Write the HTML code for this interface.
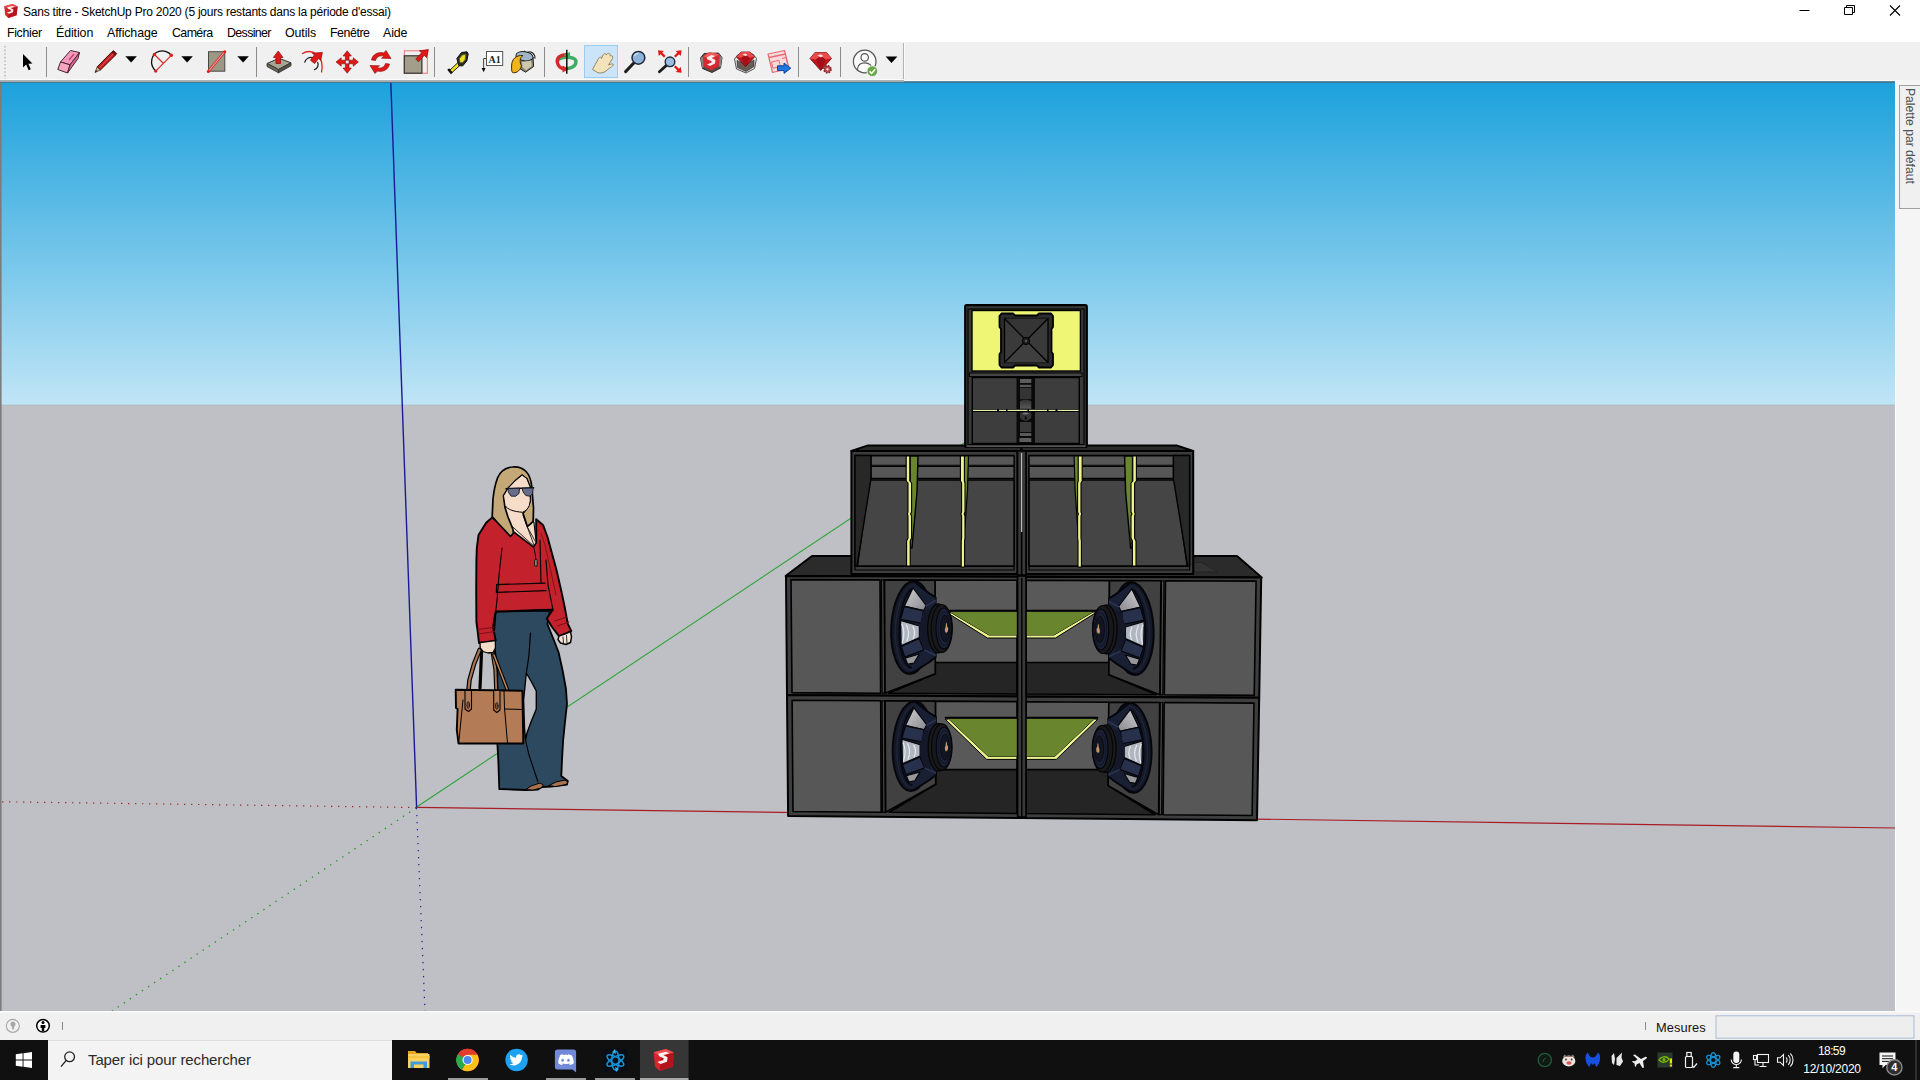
<!DOCTYPE html>
<html><head><meta charset="utf-8"><title>SketchUp</title>
<style>
html,body{margin:0;padding:0;}
body{width:1920px;height:1080px;overflow:hidden;background:#f0f0f0;font-family:"Liberation Sans",sans-serif;position:relative;}
.abs{position:absolute;}
#title{left:0;top:0;width:1920px;height:42px;background:#fff;}
#title .t{position:absolute;left:23px;top:5px;font-size:12px;color:#000;white-space:nowrap;letter-spacing:-0.23px;}
.menu{position:absolute;top:26px;font-size:12.4px;color:#000;white-space:nowrap;letter-spacing:-0.1px;}
#toolbar{left:0;top:42px;width:1920px;height:38px;background:#f0f0f0;}
#tbline{z-index:5;left:0;top:79px;width:1895px;height:4.4px;background:linear-gradient(#fafafa 0,#fafafa 1px,#b3b5b8 1px,#a3abb1 2.7px,#3f7795 2.9px,#3f7795 3.8px,#2d93c6 4.4px);}
#view{left:0;top:82px;width:1895px;height:929px;}
#tray{left:1895px;top:80px;width:25px;height:931px;background:#f5f5f5;border-left:1px solid #fff;box-sizing:border-box;}
#traytab{left:1899px;top:85px;width:21px;height:123.5px;border:1px solid #a0a0a0;border-right:none;background:#f0f0f0;box-sizing:border-box;}
#traytab span{position:absolute;left:16.5px;top:2.2px;transform-origin:0 0;transform:rotate(90deg);font-size:12.1px;color:#505050;white-space:nowrap;letter-spacing:0.02px;}
#status{left:0;top:1011px;width:1920px;height:29px;background:#f0f0f0;}
#taskbar{left:0;top:1040px;width:1920px;height:40px;background:#101010;}
</style></head><body>
<div id="title" class="abs">
<svg class="abs" style="left:3px;top:3px" width="16" height="16" viewBox="0 0 16 16">
<path d="M1.2,3.2 L9.5,1 L14.6,3.4 L13.6,12.2 L5.2,15 L2.2,12 Z" fill="#d8262c"/>
<path d="M1.2,3.2 L9.5,1 L14.6,3.4 L6.2,6 Z" fill="#ef4d4d"/>
<path d="M6.2,6 L14.6,3.4 L13.6,12.2 L5.2,15 Z" fill="#b7151d"/>
<path d="M4.2,4.2 L9.6,2.9 L11.6,3.8 L7.6,5 L10.4,6.4 L10,9.3 L6,10.7 L3.8,9.4 L7.8,8.2 L7.9,7 L5,5.7 Z" fill="#fff" opacity="0.92"/>
</svg>
<div class="t">Sans titre - SketchUp Pro 2020 (5 jours restants dans la période d'essai)</div>
<svg class="abs" style="left:1790px;top:0" width="130" height="22" viewBox="0 0 130 22">
<path d="M9.5,10.5 H19.5" stroke="#000" stroke-width="1"/>
<path d="M54.5,7.5 H62.5 V14.5 H54.5 Z M56.5,7.5 V5.5 H64.5 V12.5 H62.5" stroke="#000" stroke-width="1" fill="none"/>
<path d="M100,5.5 L110,15.5 M110,5.5 L100,15.5" stroke="#000" stroke-width="1.1"/>
</svg>
<span class="menu" style="left:7px;letter-spacing:-0.35px">Fichier</span>
<span class="menu" style="left:56px">Édition</span>
<span class="menu" style="left:107px">Affichage</span>
<span class="menu" style="left:172px;letter-spacing:-0.6px">Caméra</span>
<span class="menu" style="left:227px;letter-spacing:-0.63px">Dessiner</span>
<span class="menu" style="left:285px">Outils</span>
<span class="menu" style="left:330px;letter-spacing:-0.46px">Fenêtre</span>
<span class="menu" style="left:383px">Aide</span>
</div>
<div id="toolbar" class="abs">
<svg class="abs" style="left:0;top:0" width="920" height="38" viewBox="0 42 920 38">
<!-- grip -->
<line x1="5" y1="46" x2="5" y2="79" stroke="#bdbdbd" stroke-width="1.6" stroke-dasharray="1.6,2"/>
<!-- separators -->
<g stroke="#8c8c8c" stroke-width="1">
<line x1="46.500" y1="47" x2="46.500" y2="77"/><line x1="256.500" y1="47" x2="256.500" y2="77"/>
<line x1="434.500" y1="47" x2="434.500" y2="77"/><line x1="544.500" y1="47" x2="544.500" y2="77"/>
<line x1="688.500" y1="47" x2="688.500" y2="77"/><line x1="798.500" y1="47" x2="798.500" y2="77"/>
<line x1="840.500" y1="47" x2="840.500" y2="77"/>
</g>
<line x1="903.500" y1="43" x2="903.500" y2="80" stroke="#b4b4b4" stroke-width="1.1"/>
<line x1="904.500" y1="43" x2="904.500" y2="80" stroke="#fbfbfb" stroke-width="1"/>
<!-- select arrow -->
<path d="M23,54 L23,67.500 L26.200,64.600 L28.600,70.200 L30.800,69.200 L28.400,63.800 L32.400,63.600 Z" fill="#000"/>
<!-- eraser -->
<g stroke="#4a2234" stroke-width="1" stroke-linejoin="round">
<path d="M60.500,62 L70.500,50.500 L79.500,52.500 L70,64.800 Z" fill="#f59abb"/>
<path d="M60.500,62 L70,64.800 L67.500,73 L57.800,69.500 Z" fill="#f7a7bd"/>
<path d="M70,64.800 L79.500,52.500 L78,58.500 L67.500,73 Z" fill="#d86a92"/>
</g>
<path d="M69,60 L74,54" stroke="#c2477a" stroke-width="1.600"/>
<!-- pencil -->
<g>
<path d="M95,72.500 L97.200,66.800 L100.600,69.800 Z" fill="#d9b48a" stroke="#40302a" stroke-width="0.800"/>
<path d="M95,72.500 L96,70 L97.400,71.300Z" fill="#222"/>
<path d="M97.200,66.800 L112,51.800 L115.600,55 L100.600,69.800 Z" fill="#c21a1a" stroke="#4a1010" stroke-width="1"/>
<path d="M99,68.300 L113.800,53.400" stroke="#e86a6a" stroke-width="0.900"/>
<path d="M112,51.800 L113.500,50.600 L116.800,53.600 L115.600,55Z" fill="#7a1010" stroke="#3a0808" stroke-width="0.700"/>
</g>
<!-- dropdown arrows -->
<g fill="#000">
<path d="M125.300,56.200 h11.600 l-5.800,6.400z"/>
<path d="M181.300,56.200 h11.600 l-5.800,6.400z"/>
<path d="M237.300,56.200 h11.600 l-5.800,6.400z"/>
<path d="M885.600,56.600 h11.800 l-5.900,6.500z"/>
</g>
<!-- arc tool -->
<g fill="none">
<path d="M155.700,71.100 C148.500,64 151.500,53.500 159,51.300 C164,50 169,52 171.300,55.300" stroke="#111" stroke-width="1.300"/>
<path d="M171.300,55.300 L155.700,71.100 M154.400,54.500 L163.300,63.300" stroke="#d62a2a" stroke-width="1.200"/>
<circle cx="154.400" cy="54.500" r="1.700" fill="#e02020"/><circle cx="171.300" cy="55.300" r="1.700" fill="#e02020"/><circle cx="155.700" cy="71.100" r="1.700" fill="#e02020"/>
</g>
<!-- rectangle tool -->
<rect x="208.500" y="51.700" width="16.300" height="19.500" fill="#9c9886" stroke="#4a4a44" stroke-width="1"/>
<path d="M208.200,71.600 L224.800,51.600" stroke="#e03030" stroke-width="2.600"/>
<path d="M208.200,71.600 L224.800,51.600" stroke="#f4c8c8" stroke-width="0.900"/>
<circle cx="208.300" cy="71.600" r="1.500" fill="#e02020"/><circle cx="224.800" cy="51.700" r="1.500" fill="#e02020"/>
<!-- push/pull -->
<g stroke-linejoin="round">
<path d="M267,63.500 L279,58.300 L291,62.800 L278.500,69.500 Z" fill="#a8a692" stroke="#333" stroke-width="1"/>
<path d="M267,63.500 L278.500,69.500 L278.500,72.800 L267,66.500Z" fill="#6e6c5c" stroke="#333" stroke-width="0.900"/>
<path d="M278.500,69.500 L291,62.800 L291,65.800 L278.500,72.800Z" fill="#56544a" stroke="#333" stroke-width="0.900"/>
<path d="M278.200,51 L283,57.500 L280.500,57.500 L280.500,63.500 L275.900,63.500 L275.900,57.500 L273.400,57.500Z" fill="#e01818" stroke="#8a0c0c" stroke-width="0.700"/>
</g>
<!-- follow me -->
<g fill="none">
<path d="M302,53.800 C312,47.500 325,56 321.500,72.500" stroke="#e02828" stroke-width="1.300"/>
<path d="M304.500,62.500 C306,58 310,56.500 313,58" stroke="#222" stroke-width="1.300"/>
<path d="M314,70 C318,68.500 319,65 317.500,62" stroke="#222" stroke-width="1.300"/>
<path d="M322.400,52.400 L320.800,60.200 L318.600,58.400 L314.600,63.600 L310.400,60.200 L314.400,55 L312.400,53.200Z" fill="#e01818" stroke="#8a0c0c" stroke-width="0.700"/>
</g>
<!-- move -->
<g fill="#e01818" stroke="#8a0c0c" stroke-width="0.600" stroke-linejoin="round">
<path d="M347.200,50.800 L351.400,56 L349,56 L349,60.200 L345.400,60.200 L345.400,56 L343,56Z"/>
<path d="M347.200,73.200 L351.400,68 L349,68 L349,63.800 L345.400,63.800 L345.400,68 L343,68Z"/>
<path d="M336,62 L341.200,57.800 L341.200,60.200 L345.400,60.200 L345.400,63.800 L341.200,63.800 L341.200,66.200Z"/>
<path d="M358.400,62 L353.200,57.800 L353.200,60.200 L349,60.200 L349,63.800 L353.200,63.800 L353.200,66.200Z"/>
</g>
<!-- rotate -->
<g fill="#e01818" stroke="#8a0c0c" stroke-width="0.600" stroke-linejoin="round">
<path d="M371.500,60 C372.500,54.500 378,51.500 383.500,53 L386,50.500 L391,58.500 L381.500,58.200 L383.800,56.200 C380,55 376.500,57 375.500,60.500Z"/>
<path d="M389.500,64 C388.500,69.500 383,72.500 377.500,71 L375,73.500 L370,65.500 L379.500,65.800 L377.200,67.800 C381,69 384.500,67 385.500,63.500Z"/>
</g>
<!-- scale -->
<rect x="404.300" y="50.800" width="23" height="22.400" fill="none" stroke="#e86a6a" stroke-width="0.900"/>
<rect x="404.300" y="55.800" width="17.600" height="17.400" fill="#a29e8a" stroke="#333" stroke-width="1.200"/>
<path d="M428.400,49.600 L426.600,57.600 L424.200,55.400 L418.600,61.800 L415.800,59 L421.600,52.800 L419.400,50.800Z" fill="#e01818" stroke="#8a0c0c" stroke-width="0.700"/>
<!-- tape measure -->
<g stroke-linejoin="round">
<path d="M449.500,70.500 L458.500,62 L461,64.500 L452,72.500Z" fill="#f0e020" stroke="#222" stroke-width="1"/>
<path d="M448.200,69 L451.800,73.400" stroke="#111" stroke-width="2.400"/>
<path d="M456.800,58.500 L461.500,52.500 L467,51.800 L468.200,54 L466.800,61 L462.500,66 L458.800,65.500Z" fill="#2b2b2b" stroke="#111" stroke-width="1"/>
<path d="M459.400,58.800 L462.200,55 L465.600,54.600 L465.200,59.400 L462.600,62.600 L460,62.600Z" fill="#eadf28" stroke="#6a6410" stroke-width="0.700"/>
</g>
<!-- text tool -->
<rect x="486.500" y="51.500" width="16.200" height="14" fill="#fff" stroke="#555" stroke-width="1"/>
<text x="494.600" y="62.500" font-family="Liberation Serif,serif" font-size="10" font-weight="bold" text-anchor="middle" fill="#222">A1</text>
<path d="M486.500,58.500 H483.600 V68.500" fill="none" stroke="#444" stroke-width="1"/>
<path d="M481.600,68 h4 l-2,4.200z" fill="#111"/>
<!-- paint bucket -->
<g stroke-linejoin="round">
<path d="M527,52.600 C531,50.400 535.500,53.600 534.800,58.600" fill="none" stroke="#333" stroke-width="1.300"/>
<path d="M516,56.500 L524.500,51.200 L533,57 L533.600,66.500 L525.500,72.200 L517.500,67 Z" fill="#8a8672" stroke="#222" stroke-width="1"/>
<ellipse cx="524.500" cy="56.200" rx="8.600" ry="4.600" transform="rotate(8 524.500 56.200)" fill="#9fb6c8" stroke="#222" stroke-width="1"/>
<path d="M522,62 L531,60.500 L531.800,66 L526,70.200 L522.500,67Z" fill="#cfc9ac"/>
<path d="M511.600,66 C511.600,58.500 516.500,55 523,55.500 C519.500,58 519.500,62 521.500,66 C520,71.500 515,73.500 512.600,72.500 C511.400,71 511.600,69 511.600,66Z" fill="#f0b41c" stroke="#3a2a08" stroke-width="1"/>
</g>
<!-- orbit -->
<g fill="none">
<path d="M557.500,61.500 C557.500,56 575.500,55.500 576,61.500 C576,67 570,68.500 566.500,68.500" stroke="#3cae62" stroke-width="3.400"/>
<path d="M566.500,54.800 C560,54.500 556.500,58 557.400,62.600 C558,66.500 561.500,68.800 564.500,69" stroke="#d22a2a" stroke-width="3.400"/>
<path d="M562.500,65.500 L569,69 L562.500,72.500Z" fill="#d22a2a"/>
<path d="M570,52 L563.500,55 L570,58.500Z" fill="#3cae62"/>
<line x1="566.800" y1="49.800" x2="566.800" y2="73.800" stroke="#000" stroke-width="1.400"/>
</g>
<!-- pan (selected) -->
<rect x="584.500" y="45.500" width="33" height="32" fill="#cce4f7" stroke="#99cdf3" stroke-width="1"/>
<path d="M592.500,69.500 C594,66.500 596.500,62.500 598.500,58.500 C599.500,56.500 601.500,57 601.500,58.500 L603,55 C604,53 606,53.500 606,55 L607,54 C608.500,52.500 610.500,53.500 610,55.500 L610.500,56 C612,55 613.500,56.500 612.500,58.500 L608.500,65 C610.500,64 612.500,63.500 613.500,64.500 C613,66.500 609,68 606,71 C603.500,73 600,73.500 597.500,72.500 Z" fill="#f3e3bc" stroke="#8a7a5a" stroke-width="0.900" stroke-linejoin="round"/>
<!-- zoom -->
<path d="M633.800,63 L625.600,71.600" stroke="#1e1e1e" stroke-width="3" stroke-linecap="round"/>
<circle cx="638.400" cy="57.800" r="6.400" fill="#8fb4dc" stroke="#1e2a3a" stroke-width="1.500"/>
<path d="M634.500,56 a4.500,4.500 0 0 1 4,-3" stroke="#d4e6f8" stroke-width="1.200" fill="none"/>
<!-- zoom extents -->
<path d="M666.400,65.400 L659.400,71.800" stroke="#1e1e1e" stroke-width="2.800" stroke-linecap="round"/>
<circle cx="670" cy="61.800" r="4.800" fill="#9cbce0" stroke="#1e2a3a" stroke-width="1.400"/>
<g fill="#e01818">
<path d="M658,50.200 l6,0.800 l-1.800,1.600 l3.400,3.400 l-1.600,1.600 l-3.400,-3.400 l-1.800,1.800z"/>
<path d="M681.600,50.200 l-6,0.800 l1.800,1.600 l-3.400,3.400 l1.600,1.600 l3.400,-3.400 l1.800,1.800z"/>
<path d="M681.600,72.800 l-6,-0.800 l1.800,-1.600 l-3.400,-3.400 l1.600,-1.600 l3.400,3.400 l1.800,-1.800z"/>
</g>
<!-- 3d warehouse -->
<g stroke-linejoin="round">
<path d="M700.500,58 L704,53.500 L718.500,53 L722,57.500 L720.500,68 L712,72.500 L702.500,68.500Z" fill="#5a4a46" stroke="#2a2020" stroke-width="0.900"/>
<path d="M703,56.500 L709,52.200 L719.500,54.200 L719,66 L711.500,70.200 L703.500,66.500Z" fill="#d42a30"/>
<path d="M703,56.500 L709,52.200 L719.500,54.200 L712.500,58.500Z" fill="#f05a5a"/>
<path d="M700.500,58 L703,56.500 L703.500,66.500 L702.500,68.500Z M722,57.500 L719.500,55 L719,66 L720.500,68Z" fill="#8a8682"/>
<path d="M706.500,57.500 L711.500,55 L715,56 L711.500,58 L715.500,60 L715,63.500 L710,66 L707,64.500 L711.500,62.500 L711.700,61.200 L707.500,59.500Z" fill="#fff" opacity="0.900"/>
</g>
<!-- extension warehouse -->
<g stroke-linejoin="round">
<path d="M734.500,59 L738,54.500 L753,54 L756.500,58.500 L754.500,68.500 L746,73 L736.500,69Z" fill="#e6e6e6" stroke="#444" stroke-width="0.900"/>
<path d="M737,60.500 L745.500,64.500 L754,60 L754,66.500 L746,71.500 L737.500,67.500Z" fill="#6a5a56" stroke="#333" stroke-width="0.700"/>
<path d="M736.500,57 L741,52 L750,52 L754.500,57 L745.500,66.500Z" fill="#c2141c" stroke="#5a0a0e" stroke-width="0.800"/>
<path d="M736.500,57 L741,52 L750,52 L754.500,57 L749.500,57.800 L745.500,55 L741.500,57.800Z" fill="#ea4a4a"/>
<path d="M741.500,57.800 L745.500,55 L749.500,57.800 L745.500,66.500Z" fill="#a40e16"/>
<path d="M742.500,54.500 l3,-1 l2,1.600 l-2,1.200z" fill="#fff" opacity="0.800"/>
</g>
<!-- send to layout -->
<g>
<path d="M768,54 L784.500,50.500 L789,68.500 L772.500,72.500Z" fill="#f7dada" stroke="#e86a74" stroke-width="1.200" stroke-linejoin="round"/>
<path d="M769,57.500 L785.500,54" stroke="#e86a74" stroke-width="1.600"/>
<path d="M771.500,62 L779,60.300 L780.500,66.500 L773,68.300Z" fill="none" stroke="#e86a74" stroke-width="1"/>
<path d="M782,58.500 L786,57.600 L787.600,64" fill="none" stroke="#e86a74" stroke-width="1"/>
<path d="M777.500,65.800 L784,65.800 L784,63 L790.800,68.200 L784,73.400 L784,70.600 L777.500,70.600Z" fill="#1e78e0" stroke="#0a3a8a" stroke-width="0.900" stroke-linejoin="round"/>
</g>
<!-- extension manager -->
<g stroke-linejoin="round">
<path d="M810,58.500 L815,52.500 L826.500,52.500 L831.500,58.500 L820.700,70.500Z" fill="#c2141c" stroke="#5a0a0e" stroke-width="0.800"/>
<path d="M810,58.500 L815,52.500 L826.500,52.500 L831.500,58.500 L825.500,59.500 L820.700,56 L816,59.500Z" fill="#ea4a4a"/>
<path d="M816,59.500 L820.700,56 L825.500,59.500 L820.700,70.500Z" fill="#a40e16"/>
<path d="M817.500,55.500 l3.400,-1.200 l2.400,1.800 l-2.400,1.400z" fill="#fff" opacity="0.800"/>
<circle cx="827.500" cy="69.300" r="3.500" fill="#b03a40" stroke="#7a2026" stroke-width="1.600" stroke-dasharray="1.500,1.250"/>
<circle cx="827.500" cy="69.300" r="2.600" fill="#c24a50"/>
<circle cx="827.500" cy="69.300" r="1.100" fill="#f0f0f0"/>
</g>
<!-- user -->
<circle cx="864.700" cy="61.500" r="11.300" fill="#fafafa" stroke="#555" stroke-width="1.200"/>
<circle cx="864.700" cy="57.400" r="3.700" fill="none" stroke="#555" stroke-width="1.200"/>
<path d="M857.500,69.800 C857.500,64.500 861,62.800 864.700,62.800 C868.400,62.800 871.900,64.500 871.900,69.800" fill="none" stroke="#555" stroke-width="1.200"/>
<circle cx="872.300" cy="71.200" r="5.400" fill="#6aa84a" stroke="#f0f0f0" stroke-width="1"/>
<path d="M869.600,71.300 L871.600,73.400 L875.200,69.200" fill="none" stroke="#fff" stroke-width="1.500"/>

</svg>
</div>
<div id="tbline" class="abs"></div>
<div class="abs" style="z-index:6;left:904px;top:79px;width:991px;height:4.4px;background:linear-gradient(#f0f0f0 0,#f0f0f0 1px,#fbfbfb 1px,#fbfbfb 2px,#8aa0ad 2.1px,#3f7795 2.8px,#3f7795 3.8px,#2d93c6 4.4px)"></div>
<svg id="view" class="abs" width="1895" height="929" viewBox="0 82 1895 929">
<defs>
<linearGradient id="sky" x1="0" y1="0" x2="0" y2="1">
<stop offset="0" stop-color="#1ca1dc"/>
<stop offset="1" stop-color="#c0e5f6"/>
</linearGradient>
</defs>
<rect x="0" y="82" width="1895" height="323.5" fill="url(#sky)"/>
<rect x="0" y="405" width="1895" height="607" fill="#bfc0c5"/>
<rect x="0" y="404.6" width="1895" height="1.2" fill="#b4bec4"/>
<!-- axes -->
<line x1="416.3" y1="807.5" x2="2" y2="801.8" stroke="#a02828" stroke-width="1.2" stroke-dasharray="1.3,5.7"/>
<line x1="416.3" y1="807.8" x2="112" y2="1011" stroke="#1f9a1f" stroke-width="1.3" stroke-dasharray="1.4,5.9"/>
<line x1="416.5" y1="808" x2="425" y2="1011" stroke="#20208c" stroke-width="1.2" stroke-dasharray="1.3,5.7"/>
<line x1="416.3" y1="807.3" x2="1895" y2="828" stroke="#a81c24" stroke-width="1.2"/>
<line x1="416.3" y1="807.3" x2="980" y2="432.4" stroke="#27a336" stroke-width="1.05"/>
<line x1="390.8" y1="82" x2="416.6" y2="807.5" stroke="#1a1a96" stroke-width="1.4"/>
<g stroke-linejoin="round" stroke-linecap="round">
<!-- pants -->
<path d="M495.6,611.5 L550,610.5 L547.4,624 L553,638 L558.5,652 L562.5,670 L566,689 L567,704 L565,722 L563.1,741 L562,760 L561.3,776 L567.8,781 L567,784.5 L551,786.5 L542,787 L538,789.5 L525.2,790 L512,789.5 L499.3,789 L498.3,760 L497.4,744.4 L497.4,674 L493.7,637 Z" fill="#2d495f" stroke="#000" stroke-width="1.8"/>
<!-- gap between legs -->
<path d="M526.3,673 L531,681 L536.3,691 L536.3,709 L531,722 L527,733 L525.5,740 L524.5,728 L523.6,700 Z" fill="#bfc0c5" stroke="#000" stroke-width="1.4"/>
<!-- leg crease lines -->
<path d="M530.5,633 L529,655 L526.5,672" fill="none" stroke="#000" stroke-width="1.2"/>
<path d="M525.5,740 L529,755 L534,770 L538,782" fill="none" stroke="#000" stroke-width="1.1"/>
<!-- shoes -->
<path d="M526,789.5 L531,786 L540,783 L543.5,785 L541,788 L533,790 Z" fill="#a87450" stroke="#000" stroke-width="1"/>
<path d="M549,785.5 L556,782 L565,780 L568,782 L566,784.5 L556,786.5 Z" fill="#a87450" stroke="#000" stroke-width="1"/>
<!-- sweater body + arms -->
<path d="M492.2,517.4 L486,523 L478.5,535 L476.8,548 L476.4,560.5 L476.2,590 L476.4,622 L477.5,630 L479,643 L487,642.5 L495.7,640.5 L493.1,627.3 L494.5,618 L495.7,611.5 L520,610.8 L540,610 L552.9,609.7 L546.7,618.5 L552,627 L559,636.1 L566,633.5 L571.3,630.8 L567.8,623.8 L564.5,606 L560.8,588.6 L556.5,570 L552,553.5 L547.5,537 L543.2,525.3 L536.2,519.2 L536.200,542.500 L533.400,546.800 L512.8,531 L507.500,531 Z" fill="#c3212b" stroke="#000" stroke-width="1.9"/>
<!-- inner arm line -->
<path d="M502,548 L499,575 L497,600 L495.7,611.5" fill="none" stroke="#000" stroke-width="1.1"/>
<path d="M546,560 L548,585 L552.9,609.7" fill="none" stroke="#000" stroke-width="1.1"/>
<path d="M541,533 L545,545 L551,572 L556,595" fill="none" stroke="#7a1018" stroke-width="0.9"/>
<!-- belt band -->
<path d="M496.6,584.6 L545,583.2 M496.4,592.4 L546,590.6 M496.6,584.6 L496.4,592.4" fill="none" stroke="#000" stroke-width="1.2"/>
<path d="M540,540 L541,583" fill="none" stroke="#000" stroke-width="1.1"/>
<!-- cuffs -->
<path d="M478,629.5 L494,627.2 M478.5,634 L494.6,631.5" fill="none" stroke="#7a1018" stroke-width="1"/>
<path d="M555,621 L566.5,617 M557.5,626 L569,622" fill="none" stroke="#7a1018" stroke-width="1"/>
<!-- neck / chest skin -->
<path d="M503.6,495 L505,507.5 L507.500,531 L512.8,531 L533.4,546.800 L536.200,542.500 L534,523 L527.4,507.8 Z" fill="#f6ddca" stroke="#000" stroke-width="1.1"/>
<path d="M512.8,527 L533.200,545.500 M523,515.300 L534.100,545.500 M527.300,527 L536,542.500" fill="none" stroke="#000" stroke-width="0.800"/>
<path d="M534,548 L535.5,556 L536.6,566" fill="none" stroke="#000" stroke-width="0.9"/>
<rect x="534.6" y="559.5" width="2.6" height="6.6" rx="1" fill="#9a8878" stroke="#000" stroke-width="0.8"/>
<!-- hair -->
<path d="M512.4,467 C505,467.5 500,472 497.5,478 C494.5,486 493.5,494 493,499 L492.2,516.5 L497,522 L504,529.500 L510.500,536.500 L513.500,533 L512.8,528.900 L508,517 L505,507.5 L503.5,495.800 L508,488.4 L515,481 L522,475.2 L527,479 L530,486.7 L530.300,500.700 L527.4,507.8 L523,513.300 L527.300,526.500 L531,523.500 L533.200,521.100 L533.500,508 L531.8,486.7 C531,479 528.5,474 526,471.5 C522,467.5 517,466.5 512.4,467 Z" fill="#c4a878" stroke="#000" stroke-width="1.7"/>
<!-- face -->
<path d="M522,475.2 L515,481 L508,488.4 L503.5,495.800 L505,505.500 C508,510 514,511.500 522.500,512.300 C526,511 528,508.500 529.300,505.500 L530.300,500.700 L530,486.7 L527,479 Z" fill="#f6ddca" stroke="#000" stroke-width="1"/>
<!-- sunglasses -->
<path d="M506,488.800 L533.600,487.800" stroke="#0c0c14" stroke-width="1.600" fill="none"/>
<path d="M508.400,488.400 L519.600,488.200 L519,493.500 L515.500,496.3 L511,496.100 L508.600,492.500 Z" fill="#666e8c" stroke="#15151f" stroke-width="0.9"/>
<path d="M522.5,488.200 L533.200,488 L532.600,493.500 L529.800,496.2 L525.800,495.500 L523.200,492 Z" fill="#666e8c" stroke="#15151f" stroke-width="0.9"/>
<!-- right hand -->
<path d="M559,636.1 L566,633.5 L570.5,631.5 L571.5,637 L570.5,642.5 L566,644.5 L560.5,643 L558,639.5 Z" fill="#f5e4d8" stroke="#000" stroke-width="1.4"/>
<path d="M563,637 L563.5,643 M566.5,635.5 L567,643.5" stroke="#000" stroke-width="0.8" fill="none"/>
<!-- bag handles -->
<path d="M481.5,652.5 L480,688" stroke="#000" stroke-width="3.2" fill="none"/>
<path d="M479.6,650 L474,664 L469.5,680 L467.5,700" stroke="#000" stroke-width="4.6" fill="none"/>
<path d="M479.6,650 L474,664 L469.5,680 L467.5,700" stroke="#a87450" stroke-width="2.2" fill="none"/>
<path d="M492.6,652 L495.5,670 L496.6,700" stroke="#000" stroke-width="4.2" fill="none"/>
<path d="M492.6,652 L495.5,670 L496.6,700" stroke="#a87450" stroke-width="1.9" fill="none"/>
<path d="M494,655 L500.5,672 L507.5,690" stroke="#000" stroke-width="3.6" fill="none"/>
<path d="M494,655 L500.5,672 L507.5,690" stroke="#b9855c" stroke-width="1.6" fill="none"/>
<!-- bag body -->
<path d="M455.7,689.8 L522.4,690.7 L523.3,743.5 L458.5,743.5 L456.8,730 L457.6,709 L456,708 Z" fill="#b47c56" stroke="#000" stroke-width="1.9"/>
<path d="M504,691 L504.5,708 L507.5,743 M504.5,709 L523,709.5 M463,700 L458.8,742" stroke="#000" stroke-width="1" fill="none"/>
<path d="M465,690.5 L471.5,690.5 L471.5,709 L468.5,711.5 L465,709 Z" fill="#b47c56" stroke="#000" stroke-width="1.1"/>
<path d="M493.7,690.5 L500,690.5 L500,710 L496.8,712.5 L493.7,710 Z" fill="#b47c56" stroke="#000" stroke-width="1.1"/>
<ellipse cx="468.2" cy="705" rx="1.3" ry="3.4" fill="#8a5a3c" stroke="#000" stroke-width="0.7"/>
<ellipse cx="496.8" cy="706" rx="1.3" ry="3.4" fill="#8a5a3c" stroke="#000" stroke-width="0.7"/>
<!-- left cuff + hand -->
<path d="M480,642.5 L495.4,640.6 L495.4,648 L493,652.5 L488,653 L483,651.5 L480.2,648 Z" fill="#f5dcc9" stroke="#000" stroke-width="1.3"/>
</g>

<polygon points="785.6,576.0 812.0,556.0 1237.0,556.0 1261.7,577.5" fill="#2b2b2b" stroke="#000" stroke-width="2" stroke-linejoin="round"/>
<polygon points="1194.0,562.5 1202.0,562.5 1218.0,572.0 1194.0,572.0" fill="#333" stroke="#222" stroke-width="0.8"/>
<polygon points="786.0,576.0 1021.5,576.7 1021.5,696.4 787.0,695.0" fill="#3e3e3e" stroke="#000" stroke-width="2" stroke-linejoin="round" />
<polygon points="791.0,579.6 880.0,579.9 880.6,693.2 792.0,692.6" fill="#575757" stroke="#000" stroke-width="1.6" stroke-linejoin="round" />
<polygon points="881.5,579.9 884.0,579.9 884.6,693.2 882.1,693.2" fill="#4a4a4a" stroke="#000" stroke-width="1.2" stroke-linejoin="round" />
<polygon points="935.0,580.1 1017.0,580.3 1017.0,663.7 935.3,663.3" fill="#595959" stroke="#000" stroke-width="1.6" stroke-linejoin="round" />
<polygon points="935.3,662.5 1017.0,662.5 1017.0,694.0 888.6,693.2 935.3,673.8" fill="#252525" stroke="#000" stroke-width="1.6" stroke-linejoin="round"/>
<polygon points="884.5,579.9 935.0,580.1 935.3,673.8 885.1,693.2" fill="#414141" stroke="#000" stroke-width="1.6" stroke-linejoin="round" />
<polygon points="950.0,612.0 989.0,635.0 1017.0,635.0 1017.0,638.0 987.4,638.0 946.6,612.3" fill="#eef392" stroke="#000" stroke-width="1.0" stroke-linejoin="round" />
<polygon points="950.0,612.0 1017.0,612.0 1017.0,635.0 989.0,635.0" fill="#69862f" stroke-linejoin="round" />
<polygon points="947.0,610.8 1017.0,610.8" fill="none" stroke="#000" stroke-width="2" stroke-linejoin="round" />
<g transform="translate(911.2,628.5) scale(1.0,1.0)" stroke-linejoin="round">
<defs><linearGradient id="cg" x1="0" y1="0" x2="1" y2="1"><stop offset="0" stop-color="#d0d0d4"/><stop offset="1" stop-color="#88888c"/></linearGradient></defs>
<path d="M2.6,-47 L17,-35.7 L24.5,-31 L24.5,28.5 L18,33.6 L3.7,42.8 L-1.4,45 L-10,30 L-10,-30 Z" fill="#1a2034" stroke="#05060b" stroke-width="1.8"/>
<ellipse cx="0.6" cy="-1" rx="20.6" ry="46.4" transform="rotate(3)" fill="#141827" stroke="#05060b" stroke-width="2"/>
<ellipse cx="1.8" cy="-1" rx="17.6" ry="43" transform="rotate(3)" fill="none" stroke="#1f2539" stroke-width="1.4"/>
<ellipse cx="3" cy="-1" rx="15" ry="40.2" transform="rotate(3)" fill="#171c2e" stroke="#05060b" stroke-width="1.3"/>
<path d="M2.6,-46.5 L17,-35.7 L24.5,-31 L24.5,28.5 L18,33.6 L3.7,42.8 L0,44 L4,0 Z" fill="#1a2034"/>
<path d="M2.6,-47 L17,-35.7 L24.5,-31 M24.5,28.5 L18,33.6 L3.7,42.8 L-1.4,45" fill="none" stroke="#05060b" stroke-width="1.8"/>
<path d="M1.8,-40.5 L15,-23 L12.3,-17.8 L-6.8,-22.4 Z" fill="url(#cg)" stroke="#05060b" stroke-width="1.2"/>
<path d="M-7,-22 L12,-18 L10.8,-5.1 L-10.6,-9.2 Z" fill="#28314c" stroke="#05060b" stroke-width="1.3"/>
<path d="M-10.6,-8.1 L8.2,-2.5 L8.2,9.2 L-10.1,17.3 Z" fill="#b0b5be" stroke="#05060b" stroke-width="1.3"/>
<path d="M-9.4,-5 Q-5.5,4.5 -9,14.5 M-5,-4 Q-0.5,4 -4.5,13 M1.5,-2.5 Q5,4 1.8,10.5" fill="none" stroke="#dfe7f0" stroke-width="1.3"/>
<path d="M-10,18 L8,10 L12.8,21.4 L-6.5,28.5 Z" fill="#28314c" stroke="#05060b" stroke-width="1.3"/>
<path d="M-6,29.6 L8.2,25.5 L2.6,34.7 L-3.5,35.7 Z" fill="#98989b" stroke="#05060b" stroke-width="1.2"/>
<path d="M12.3,-17.8 L19,-20 L19,24 L12.8,21.4 L8.2,9.2 L8.2,-2.5 Z" fill="#141828"/>
<path d="M14.4,-22.4 L24.5,-28 M12.8,21.4 L24.5,27" stroke="#2a3556" stroke-width="1.6" fill="none"/>
<ellipse cx="27" cy="0" rx="10.5" ry="24.5" fill="#1b1b1d" stroke="#050505" stroke-width="1.3"/>
<ellipse cx="30.5" cy="0" rx="10.6" ry="24" fill="#17181c" stroke="#050505" stroke-width="1.2"/>
<ellipse cx="32.7" cy="0" rx="8" ry="20.5" fill="#1b2136" stroke="#05060b" stroke-width="1.2"/>
<ellipse cx="33.2" cy="0" rx="6.4" ry="17" fill="none" stroke="#10131f" stroke-width="0.9"/>
<ellipse cx="33.8" cy="0" rx="4.6" ry="13.4" fill="#131620" stroke="#080a12" stroke-width="0.8"/>
<path d="M34.8,-5 l0.9,-0.6 l0.2,3.5 l1.1,1.6 l-0.3,4 l-0.8,-0.4 l-0.4,1.8 l-0.8,-1.6 l-0.6,1.3 l-0.5,-3.600 l0.800,-2.600 z" fill="#c09870"/>
</g>
<polygon points="1261.2,577.4 1021.5,576.7 1021.5,696.4 1259.2,697.8" fill="#3e3e3e" stroke="#000" stroke-width="2" stroke-linejoin="round" />
<polygon points="1256.1,581.1 1165.5,580.8 1164.3,694.8 1254.2,695.4" fill="#575757" stroke="#000" stroke-width="1.6" stroke-linejoin="round" />
<polygon points="1164.0,580.8 1161.4,580.8 1160.3,694.8 1162.8,694.8" fill="#4a4a4a" stroke="#000" stroke-width="1.2" stroke-linejoin="round" />
<polygon points="1109.5,580.6 1026.1,580.3 1026.1,663.7 1109.0,664.2" fill="#595959" stroke="#000" stroke-width="1.6" stroke-linejoin="round" />
<polygon points="1109.0,662.5 1026.1,662.5 1026.0,694.0 1156.2,694.8 1108.9,674.8" fill="#252525" stroke="#000" stroke-width="1.6" stroke-linejoin="round"/>
<polygon points="1160.9,580.8 1109.5,580.6 1108.9,674.8 1159.8,694.8" fill="#414141" stroke="#000" stroke-width="1.6" stroke-linejoin="round" />
<polygon points="1093.0,612.0 1054.0,635.0 1026.0,635.0 1026.0,638.0 1055.6,638.0 1096.4,612.3" fill="#eef392" stroke="#000" stroke-width="1.0" stroke-linejoin="round" />
<polygon points="1093.0,612.0 1026.0,612.0 1026.0,635.0 1054.0,635.0" fill="#69862f" stroke-linejoin="round" />
<polygon points="1096.0,610.8 1026.0,610.8" fill="none" stroke="#000" stroke-width="2" stroke-linejoin="round" />
<g transform="translate(1133.6,629.5) scale(-1.0,1.0)" stroke-linejoin="round">
<defs><linearGradient id="cg" x1="0" y1="0" x2="1" y2="1"><stop offset="0" stop-color="#d0d0d4"/><stop offset="1" stop-color="#88888c"/></linearGradient></defs>
<path d="M2.6,-47 L17,-35.7 L24.5,-31 L24.5,28.5 L18,33.6 L3.7,42.8 L-1.4,45 L-10,30 L-10,-30 Z" fill="#1a2034" stroke="#05060b" stroke-width="1.8"/>
<ellipse cx="0.6" cy="-1" rx="20.6" ry="46.4" transform="rotate(3)" fill="#141827" stroke="#05060b" stroke-width="2"/>
<ellipse cx="1.8" cy="-1" rx="17.6" ry="43" transform="rotate(3)" fill="none" stroke="#1f2539" stroke-width="1.4"/>
<ellipse cx="3" cy="-1" rx="15" ry="40.2" transform="rotate(3)" fill="#171c2e" stroke="#05060b" stroke-width="1.3"/>
<path d="M2.6,-46.5 L17,-35.7 L24.5,-31 L24.5,28.5 L18,33.6 L3.7,42.8 L0,44 L4,0 Z" fill="#1a2034"/>
<path d="M2.6,-47 L17,-35.7 L24.5,-31 M24.5,28.5 L18,33.6 L3.7,42.8 L-1.4,45" fill="none" stroke="#05060b" stroke-width="1.8"/>
<path d="M1.8,-40.5 L15,-23 L12.3,-17.8 L-6.8,-22.4 Z" fill="url(#cg)" stroke="#05060b" stroke-width="1.2"/>
<path d="M-7,-22 L12,-18 L10.8,-5.1 L-10.6,-9.2 Z" fill="#28314c" stroke="#05060b" stroke-width="1.3"/>
<path d="M-10.6,-8.1 L8.2,-2.5 L8.2,9.2 L-10.1,17.3 Z" fill="#b0b5be" stroke="#05060b" stroke-width="1.3"/>
<path d="M-9.4,-5 Q-5.5,4.5 -9,14.5 M-5,-4 Q-0.5,4 -4.5,13 M1.5,-2.5 Q5,4 1.8,10.5" fill="none" stroke="#dfe7f0" stroke-width="1.3"/>
<path d="M-10,18 L8,10 L12.8,21.4 L-6.5,28.5 Z" fill="#28314c" stroke="#05060b" stroke-width="1.3"/>
<path d="M-6,29.6 L8.2,25.5 L2.6,34.7 L-3.5,35.7 Z" fill="#98989b" stroke="#05060b" stroke-width="1.2"/>
<path d="M12.3,-17.8 L19,-20 L19,24 L12.8,21.4 L8.2,9.2 L8.2,-2.5 Z" fill="#141828"/>
<path d="M14.4,-22.4 L24.5,-28 M12.8,21.4 L24.5,27" stroke="#2a3556" stroke-width="1.6" fill="none"/>
<ellipse cx="27" cy="0" rx="10.5" ry="24.5" fill="#1b1b1d" stroke="#050505" stroke-width="1.3"/>
<ellipse cx="30.5" cy="0" rx="10.6" ry="24" fill="#17181c" stroke="#050505" stroke-width="1.2"/>
<ellipse cx="32.7" cy="0" rx="8" ry="20.5" fill="#1b2136" stroke="#05060b" stroke-width="1.2"/>
<ellipse cx="33.2" cy="0" rx="6.4" ry="17" fill="none" stroke="#10131f" stroke-width="0.9"/>
<ellipse cx="33.8" cy="0" rx="4.6" ry="13.4" fill="#131620" stroke="#080a12" stroke-width="0.8"/>
<path d="M34.8,-5 l0.9,-0.6 l0.2,3.5 l1.1,1.6 l-0.3,4 l-0.8,-0.4 l-0.4,1.8 l-0.8,-1.6 l-0.6,1.3 l-0.5,-3.600 l0.800,-2.600 z" fill="#c09870"/>
</g>
<polygon points="787.0,695.0 1021.5,696.4 1021.5,818.1 788.1,816.0" fill="#3e3e3e" stroke="#000" stroke-width="2" stroke-linejoin="round" />
<polygon points="792.1,700.2 880.7,700.8 881.2,812.2 793.0,811.5" fill="#575757" stroke="#000" stroke-width="1.6" stroke-linejoin="round" />
<polygon points="882.1,700.8 884.6,700.8 885.2,812.3 882.7,812.3" fill="#4a4a4a" stroke="#000" stroke-width="1.2" stroke-linejoin="round" />
<polygon points="935.4,701.1 1017.0,701.6 1017.0,771.4 935.6,770.8" fill="#595959" stroke="#000" stroke-width="1.6" stroke-linejoin="round" />
<polygon points="935.6,769.6 1017.0,769.6 1017.0,813.5 889.2,812.3 935.7,784.2" fill="#252525" stroke="#000" stroke-width="1.6" stroke-linejoin="round"/>
<polygon points="885.1,700.8 935.4,701.1 935.7,784.2 885.7,812.3" fill="#414141" stroke="#000" stroke-width="1.6" stroke-linejoin="round" />
<polygon points="948.7,719.0 988.3,756.4 1017.0,756.4 1017.0,759.4 986.7,759.4 945.3,719.3" fill="#eef392" stroke="#000" stroke-width="1.0" stroke-linejoin="round" />
<polygon points="948.7,719.0 1017.0,719.0 1017.0,756.4 988.3,756.4" fill="#69862f" stroke-linejoin="round" />
<polygon points="945.7,717.8 1017.0,717.8" fill="none" stroke="#000" stroke-width="2" stroke-linejoin="round" />
<g transform="translate(912.2,747.1) scale(0.97,0.97)" stroke-linejoin="round">
<defs><linearGradient id="cg" x1="0" y1="0" x2="1" y2="1"><stop offset="0" stop-color="#d0d0d4"/><stop offset="1" stop-color="#88888c"/></linearGradient></defs>
<path d="M2.6,-47 L17,-35.7 L24.5,-31 L24.5,28.5 L18,33.6 L3.7,42.8 L-1.4,45 L-10,30 L-10,-30 Z" fill="#1a2034" stroke="#05060b" stroke-width="1.8"/>
<ellipse cx="0.6" cy="-1" rx="20.6" ry="46.4" transform="rotate(3)" fill="#141827" stroke="#05060b" stroke-width="2"/>
<ellipse cx="1.8" cy="-1" rx="17.6" ry="43" transform="rotate(3)" fill="none" stroke="#1f2539" stroke-width="1.4"/>
<ellipse cx="3" cy="-1" rx="15" ry="40.2" transform="rotate(3)" fill="#171c2e" stroke="#05060b" stroke-width="1.3"/>
<path d="M2.6,-46.5 L17,-35.7 L24.5,-31 L24.5,28.5 L18,33.6 L3.7,42.8 L0,44 L4,0 Z" fill="#1a2034"/>
<path d="M2.6,-47 L17,-35.7 L24.5,-31 M24.5,28.5 L18,33.6 L3.7,42.8 L-1.4,45" fill="none" stroke="#05060b" stroke-width="1.8"/>
<path d="M1.8,-40.5 L15,-23 L12.3,-17.8 L-6.8,-22.4 Z" fill="url(#cg)" stroke="#05060b" stroke-width="1.2"/>
<path d="M-7,-22 L12,-18 L10.8,-5.1 L-10.6,-9.2 Z" fill="#28314c" stroke="#05060b" stroke-width="1.3"/>
<path d="M-10.6,-8.1 L8.2,-2.5 L8.2,9.2 L-10.1,17.3 Z" fill="#b0b5be" stroke="#05060b" stroke-width="1.3"/>
<path d="M-9.4,-5 Q-5.5,4.5 -9,14.5 M-5,-4 Q-0.5,4 -4.5,13 M1.5,-2.5 Q5,4 1.8,10.5" fill="none" stroke="#dfe7f0" stroke-width="1.3"/>
<path d="M-10,18 L8,10 L12.8,21.4 L-6.5,28.5 Z" fill="#28314c" stroke="#05060b" stroke-width="1.3"/>
<path d="M-6,29.6 L8.2,25.5 L2.6,34.7 L-3.5,35.7 Z" fill="#98989b" stroke="#05060b" stroke-width="1.2"/>
<path d="M12.3,-17.8 L19,-20 L19,24 L12.8,21.4 L8.2,9.2 L8.2,-2.5 Z" fill="#141828"/>
<path d="M14.4,-22.4 L24.5,-28 M12.8,21.4 L24.5,27" stroke="#2a3556" stroke-width="1.6" fill="none"/>
<ellipse cx="27" cy="0" rx="10.5" ry="24.5" fill="#1b1b1d" stroke="#050505" stroke-width="1.3"/>
<ellipse cx="30.5" cy="0" rx="10.6" ry="24" fill="#17181c" stroke="#050505" stroke-width="1.2"/>
<ellipse cx="32.7" cy="0" rx="8" ry="20.5" fill="#1b2136" stroke="#05060b" stroke-width="1.2"/>
<ellipse cx="33.2" cy="0" rx="6.4" ry="17" fill="none" stroke="#10131f" stroke-width="0.9"/>
<ellipse cx="33.8" cy="0" rx="4.6" ry="13.4" fill="#131620" stroke="#080a12" stroke-width="0.8"/>
<path d="M34.8,-5 l0.9,-0.6 l0.2,3.5 l1.1,1.6 l-0.3,4 l-0.8,-0.4 l-0.4,1.8 l-0.8,-1.6 l-0.6,1.3 l-0.5,-3.600 l0.800,-2.600 z" fill="#c09870"/>
</g>
<polygon points="1259.2,697.8 1021.5,696.4 1021.5,818.1 1257.0,820.2" fill="#3e3e3e" stroke="#000" stroke-width="2" stroke-linejoin="round" />
<polygon points="1254.0,703.1 1164.2,702.5 1163.1,814.8 1252.1,815.5" fill="#575757" stroke="#000" stroke-width="1.6" stroke-linejoin="round" />
<polygon points="1162.7,702.5 1160.2,702.5 1159.1,814.7 1161.6,814.7" fill="#4a4a4a" stroke="#000" stroke-width="1.2" stroke-linejoin="round" />
<polygon points="1108.8,702.2 1026.0,701.7 1026.0,771.5 1108.3,772.1" fill="#595959" stroke="#000" stroke-width="1.6" stroke-linejoin="round" />
<polygon points="1108.3,769.6 1026.0,769.6 1026.0,813.5 1155.1,814.7 1108.2,785.6" fill="#252525" stroke="#000" stroke-width="1.6" stroke-linejoin="round"/>
<polygon points="1159.7,702.5 1108.8,702.2 1108.2,785.6 1158.6,814.7" fill="#414141" stroke="#000" stroke-width="1.6" stroke-linejoin="round" />
<polygon points="1094.3,719.0 1054.7,756.4 1026.0,756.4 1026.0,759.4 1056.3,759.4 1097.7,719.3" fill="#eef392" stroke="#000" stroke-width="1.0" stroke-linejoin="round" />
<polygon points="1094.3,719.0 1026.0,719.0 1026.0,756.4 1054.7,756.4" fill="#69862f" stroke-linejoin="round" />
<polygon points="1097.3,717.8 1026.0,717.8" fill="none" stroke="#000" stroke-width="2" stroke-linejoin="round" />
<g transform="translate(1132.1,748.7) scale(-0.97,0.97)" stroke-linejoin="round">
<defs><linearGradient id="cg" x1="0" y1="0" x2="1" y2="1"><stop offset="0" stop-color="#d0d0d4"/><stop offset="1" stop-color="#88888c"/></linearGradient></defs>
<path d="M2.6,-47 L17,-35.7 L24.5,-31 L24.5,28.5 L18,33.6 L3.7,42.8 L-1.4,45 L-10,30 L-10,-30 Z" fill="#1a2034" stroke="#05060b" stroke-width="1.8"/>
<ellipse cx="0.6" cy="-1" rx="20.6" ry="46.4" transform="rotate(3)" fill="#141827" stroke="#05060b" stroke-width="2"/>
<ellipse cx="1.8" cy="-1" rx="17.6" ry="43" transform="rotate(3)" fill="none" stroke="#1f2539" stroke-width="1.4"/>
<ellipse cx="3" cy="-1" rx="15" ry="40.2" transform="rotate(3)" fill="#171c2e" stroke="#05060b" stroke-width="1.3"/>
<path d="M2.6,-46.5 L17,-35.7 L24.5,-31 L24.5,28.5 L18,33.6 L3.7,42.8 L0,44 L4,0 Z" fill="#1a2034"/>
<path d="M2.6,-47 L17,-35.7 L24.5,-31 M24.5,28.5 L18,33.6 L3.7,42.8 L-1.4,45" fill="none" stroke="#05060b" stroke-width="1.8"/>
<path d="M1.8,-40.5 L15,-23 L12.3,-17.8 L-6.8,-22.4 Z" fill="url(#cg)" stroke="#05060b" stroke-width="1.2"/>
<path d="M-7,-22 L12,-18 L10.8,-5.1 L-10.6,-9.2 Z" fill="#28314c" stroke="#05060b" stroke-width="1.3"/>
<path d="M-10.6,-8.1 L8.2,-2.5 L8.2,9.2 L-10.1,17.3 Z" fill="#b0b5be" stroke="#05060b" stroke-width="1.3"/>
<path d="M-9.4,-5 Q-5.5,4.5 -9,14.5 M-5,-4 Q-0.5,4 -4.5,13 M1.5,-2.5 Q5,4 1.8,10.5" fill="none" stroke="#dfe7f0" stroke-width="1.3"/>
<path d="M-10,18 L8,10 L12.8,21.4 L-6.5,28.5 Z" fill="#28314c" stroke="#05060b" stroke-width="1.3"/>
<path d="M-6,29.6 L8.2,25.5 L2.6,34.7 L-3.5,35.7 Z" fill="#98989b" stroke="#05060b" stroke-width="1.2"/>
<path d="M12.3,-17.8 L19,-20 L19,24 L12.8,21.4 L8.2,9.2 L8.2,-2.5 Z" fill="#141828"/>
<path d="M14.4,-22.4 L24.5,-28 M12.8,21.4 L24.5,27" stroke="#2a3556" stroke-width="1.6" fill="none"/>
<ellipse cx="27" cy="0" rx="10.5" ry="24.5" fill="#1b1b1d" stroke="#050505" stroke-width="1.3"/>
<ellipse cx="30.5" cy="0" rx="10.6" ry="24" fill="#17181c" stroke="#050505" stroke-width="1.2"/>
<ellipse cx="32.7" cy="0" rx="8" ry="20.5" fill="#1b2136" stroke="#05060b" stroke-width="1.2"/>
<ellipse cx="33.2" cy="0" rx="6.4" ry="17" fill="none" stroke="#10131f" stroke-width="0.9"/>
<ellipse cx="33.8" cy="0" rx="4.6" ry="13.4" fill="#131620" stroke="#080a12" stroke-width="0.8"/>
<path d="M34.8,-5 l0.9,-0.6 l0.2,3.5 l1.1,1.6 l-0.3,4 l-0.8,-0.4 l-0.4,1.8 l-0.8,-1.6 l-0.6,1.3 l-0.5,-3.600 l0.800,-2.600 z" fill="#c09870"/>
</g>
<rect x="1017.6" y="576" width="8.4" height="241" fill="#3a3a3a" stroke="#000" stroke-width="1.6"/>
<line x1="1021.8" y1="578" x2="1021.8" y2="816" stroke="#000" stroke-width="1.4"/>
<polygon points="851.4,451.0 868.0,445.4 1021.5,445.4 1021.5,451.0" fill="#2a2a2a" stroke="#000" stroke-width="2" stroke-linejoin="round"/>
<polygon points="851.4,451.0 1017.5,451.0 1017.5,574.0 851.4,574.0" fill="#3c3c3c" stroke="#000" stroke-width="2" stroke-linejoin="round"/>
<polygon points="855.0,455.5 1014.0,455.5 1014.0,566.0 855.0,566.0" fill="#454545" stroke="#000" stroke-width="1.4" stroke-linejoin="round"/>
<polygon points="871.0,456.0 1014.0,456.0 1014.0,465.3 871.0,465.3" fill="#575757" stroke="#000" stroke-width="1.1" stroke-linejoin="round"/>
<polygon points="871.0,466.5 1014.0,466.5 1014.0,478.4 871.0,478.4" fill="#575757" stroke="#000" stroke-width="1.1" stroke-linejoin="round"/>
<polygon points="869.0,480.0 1014.0,480.0 1014.0,566.0 857.5,566.0" fill="#454545" stroke="#000" stroke-width="1.4" stroke-linejoin="round"/>
<polygon points="855.0,455.5 871.0,455.5 871.0,478.5 857.0,566.0 855.0,566.0" fill="#282828" stroke="#000" stroke-width="1.4" stroke-linejoin="round"/>
<polygon points="855.0,566.5 1014.0,566.5 1014.0,570.0 855.0,570.0" fill="#3c3c3c" stroke="#000" stroke-width="1.2" stroke-linejoin="round"/>
<polygon points="910.0,456.0 918.0,456.0 917.0,492.0 912.0,548.0 910.5,548.0" fill="#69862f" stroke="#000" stroke-width="1.4" stroke-linejoin="round"/>
<polygon points="964.0,456.0 968.5,456.0 967.5,490.0 965.0,527.0 964.0,527.0" fill="#69862f" stroke="#000" stroke-width="1.2" stroke-linejoin="round"/>
<polygon points="906.2,456.0 909.8,456.0 909.8,481.0 911.6,483.0 911.6,512.0 910.6,514.0 911.6,516.0 911.6,538.0 910.2,541.0 910.2,566.0 906.6,566.0 906.6,541.0 908.0,538.0 908.0,516.0 907.3,514.0 908.0,512.0 908.0,483.0 906.2,481.0" fill="#edf28e" stroke="#000" stroke-width="1.1" stroke-linejoin="round"/>
<polygon points="960.4,456.0 964.4,456.0 964.4,481.0 965.0,483.0 965.0,512.0 964.2,514.0 965.0,516.0 965.0,538.0 964.6,541.0 964.6,567.0 961.2,567.0 961.2,541.0 961.6,538.0 961.6,516.0 960.8,514.0 961.6,512.0 961.6,483.0 960.4,481.0" fill="#edf28e" stroke="#000" stroke-width="1.1" stroke-linejoin="round"/>
<polygon points="1193.2,451.0 1176.5,445.4 1021.5,445.4 1021.5,451.0" fill="#2a2a2a" stroke="#000" stroke-width="2" stroke-linejoin="round"/>
<polygon points="1193.2,451.0 1025.5,451.0 1025.5,574.0 1193.2,574.0" fill="#3c3c3c" stroke="#000" stroke-width="2" stroke-linejoin="round"/>
<polygon points="1189.6,455.5 1029.1,455.5 1029.1,566.0 1189.6,566.0" fill="#454545" stroke="#000" stroke-width="1.4" stroke-linejoin="round"/>
<polygon points="1173.4,456.0 1029.1,456.0 1029.1,465.3 1173.4,465.3" fill="#575757" stroke="#000" stroke-width="1.1" stroke-linejoin="round"/>
<polygon points="1173.4,466.5 1029.1,466.5 1029.1,478.4 1173.4,478.4" fill="#575757" stroke="#000" stroke-width="1.1" stroke-linejoin="round"/>
<polygon points="1175.4,480.0 1029.1,480.0 1029.1,566.0 1187.1,566.0" fill="#454545" stroke="#000" stroke-width="1.4" stroke-linejoin="round"/>
<polygon points="1189.6,455.5 1173.4,455.5 1173.4,478.5 1187.6,566.0 1189.6,566.0" fill="#282828" stroke="#000" stroke-width="1.4" stroke-linejoin="round"/>
<polygon points="1189.6,566.5 1029.1,566.5 1029.1,570.0 1189.6,570.0" fill="#3c3c3c" stroke="#000" stroke-width="1.2" stroke-linejoin="round"/>
<polygon points="1132.6,456.0 1124.6,456.0 1125.6,492.0 1130.6,548.0 1132.1,548.0" fill="#69862f" stroke="#000" stroke-width="1.4" stroke-linejoin="round"/>
<polygon points="1078.6,456.0 1074.1,456.0 1075.1,490.0 1077.6,527.0 1078.6,527.0" fill="#69862f" stroke="#000" stroke-width="1.2" stroke-linejoin="round"/>
<polygon points="1136.4,456.0 1132.8,456.0 1132.8,481.0 1131.0,483.0 1131.0,512.0 1132.0,514.0 1131.0,516.0 1131.0,538.0 1132.4,541.0 1132.4,566.0 1136.0,566.0 1136.0,541.0 1134.6,538.0 1134.6,516.0 1135.3,514.0 1134.6,512.0 1134.6,483.0 1136.4,481.0" fill="#edf28e" stroke="#000" stroke-width="1.1" stroke-linejoin="round"/>
<polygon points="1082.2,456.0 1078.2,456.0 1078.2,481.0 1077.6,483.0 1077.6,512.0 1078.4,514.0 1077.6,516.0 1077.6,538.0 1078.0,541.0 1078.0,567.0 1081.4,567.0 1081.4,541.0 1081.0,538.0 1081.0,516.0 1081.8,514.0 1081.0,512.0 1081.0,483.0 1082.2,481.0" fill="#edf28e" stroke="#000" stroke-width="1.1" stroke-linejoin="round"/>
<rect x="1017.5" y="451" width="8.5" height="124" fill="#3a3a3a" stroke="#000" stroke-width="1.6"/>
<line x1="1021.6" y1="453" x2="1021.6" y2="532" stroke="#d8d8d8" stroke-width="0.9"/>
<line x1="1021.6" y1="532" x2="1021.6" y2="575" stroke="#000" stroke-width="1.6"/>
<rect x="965.2" y="305.2" width="121.6" height="141.8" fill="#3a3a3a" stroke="#000" stroke-width="2.2" rx="1.5"/>
<rect x="968" y="309" width="116" height="135.500" fill="none" stroke="#000" stroke-width="1.2"/>
<rect x="966.500" y="445.600" width="119" height="1.500" fill="#555"/>
<rect x="972" y="310.5" width="108.4" height="60.5" fill="#eff575" stroke="#000" stroke-width="1.4"/>
<rect x="969.5" y="373" width="112.5" height="3.6" fill="#444" stroke="#000" stroke-width="1"/>
<rect x="972.3" y="377.5" width="107" height="66" fill="#3d3d3d" stroke="#000" stroke-width="1.4"/>
<path d="M1001.5,313.5 L1013,313.5 L1015,315.5 L1037,315.5 L1039,313.5 L1051,313.5 L1053,316 L1053,327 L1051.5,329 L1051.5,352 L1053,354 L1053,365 L1051,367.5 L1039,367.5 L1037,365.5 L1015,365.5 L1013,367.5 L1001.5,367.5 L999.5,365 L999.5,354 L1001,352 L1001,329 L999.5,327 L999.5,316 Z" fill="#2c2c2c" stroke="#000" stroke-width="1.8" stroke-linejoin="round"/>
<rect x="1004.5" y="318.5" width="43.5" height="44" fill="#3a3a3a" stroke="#000" stroke-width="1.3"/>
<polygon points="1004.5,318.5 1048,318.5 1026,341" fill="#353535"/>
<polygon points="1004.5,362.5 1048,362.5 1026,341" fill="#3f3f3f"/>
<path d="M1004.5,318.5 L1048,362.5 M1048,318.5 L1004.5,362.5" stroke="#000" stroke-width="1.3"/>
<circle cx="1026" cy="341" r="3.6" fill="#1e1e1e" stroke="#000" stroke-width="1"/>
<circle cx="1026" cy="341" r="1.2" fill="#555"/>
<rect x="1016.5" y="378" width="18.5" height="65" fill="#0a0a0a"/>
<rect x="1020" y="379" width="11.3" height="63" fill="#0a0a0a"/>
<rect x="1020" y="379" width="11.3" height="4" fill="#5c5c5c"/>
<rect x="1020" y="384.800" width="11.3" height="2.200" fill="#585858"/>
<rect x="1020" y="387.800" width="11.3" height="11.400" fill="#343434"/>
<defs><linearGradient id="tg" x1="0" y1="0" x2="0" y2="1"><stop offset="0" stop-color="#333"/><stop offset="1" stop-color="#5a5a5a"/></linearGradient></defs>
<path d="M1020,401 Q1025.600,398.500 1031.300,401 L1031.300,408.800 L1020,408.800Z" fill="url(#tg)"/>
<path d="M1020,412.500 L1031.300,412.500 L1031.300,418 Q1025.600,424 1020,418Z" fill="#343434"/>
<ellipse cx="1025.600" cy="413.600" rx="3.200" ry="1" fill="#777"/>
<rect x="1024.800" y="416.500" width="1.800" height="3" fill="#0a0a0a"/>
<rect x="1020" y="422" width="11.3" height="10" fill="#3a3a3a"/>
<rect x="1020" y="433" width="11.3" height="3" fill="#5a5a5a"/>
<rect x="1019.500" y="438" width="11.800" height="4" fill="#5c5c5c"/>
<line x1="972.5" y1="410.4" x2="1079" y2="410.4" stroke="#000" stroke-width="3"/>
<line x1="973" y1="410.4" x2="1078.5" y2="410.4" stroke="#e4ecae" stroke-width="1.3" stroke-dasharray="24,2,7,1.5,20,1.5,18,1.5,7,2,24"/>
<rect x="0" y="82" width="1.6" height="929" fill="#7c7c7c"/>
</svg>
<div id="tray" class="abs"></div>
<div id="traytab" class="abs"><span>Palette par défaut</span></div>
<div id="status" class="abs">
<svg class="abs" style="left:0;top:0" width="1920" height="29" viewBox="0 1011 1920 29">
<rect x="0" y="1011" width="1920" height="1.4" fill="#fcfcfc"/>
<circle cx="12.8" cy="1025.9" r="6.5" fill="#f2f2f2" stroke="#a6a6a6" stroke-width="1.1"/>
<path d="M13,1021.5 a2.6,2.6 0 0 1 1.2,4.9 l-0.4,3 h-1.6 l-0.4,-3 a2.6,2.6 0 0 1 1.2,-4.9z" fill="#a8a8a8"/>
<circle cx="43" cy="1025.8" r="6.3" fill="#fff" stroke="#000" stroke-width="1.5"/>
<circle cx="43" cy="1022.6" r="1.5" fill="#000"/>
<path d="M40.6,1025 h4.8 v3 h-1.2 v3 h-2.4 v-3 h-1.2z" fill="#000"/>
<rect x="62" y="1022" width="1" height="8" fill="#8a8a8a"/>
<rect x="1645" y="1022" width="1" height="8" fill="#8a8a8a"/>
<rect x="1716" y="1015.8" width="198" height="22.4" fill="#eeeeee" stroke="#a9bcd6" stroke-width="1"/>
</svg>
<div class="abs" style="left:1656px;top:9.2px;font-size:12.8px;color:#111;letter-spacing:0.1px">Mesures</div>
</div>
<div id="taskbar" class="abs">
<svg class="abs" style="left:0;top:0" width="1920" height="40" viewBox="0 1040 1920 40">
<!-- start -->
<g fill="#fff">
<path d="M15.8,1054.2 L22.6,1053.3 V1059.5 H15.8 Z"/>
<path d="M23.5,1053.2 L32,1052 V1059.5 H23.5 Z"/>
<path d="M15.8,1060.4 H22.6 V1066.7 L15.8,1065.8 Z"/>
<path d="M23.5,1060.4 H32 V1068 L23.5,1066.8 Z"/>
</g>
<!-- search box -->
<rect x="48" y="1040" width="344" height="40" fill="#f3f3f3"/>
<rect x="48" y="1040" width="344" height="1" fill="#dcdcdc"/>
<circle cx="69.6" cy="1056.8" r="4.9" fill="none" stroke="#222" stroke-width="1.3"/>
<path d="M66.2,1060.4 L61,1066.6" stroke="#222" stroke-width="1.4"/>
<!-- active app -->
<rect x="640" y="1040" width="48.5" height="40" fill="#363636"/>
<rect x="448" y="1078" width="40" height="2" fill="#9b9b9b"/>
<rect x="546" y="1078" width="40" height="2" fill="#9b9b9b"/>
<rect x="595" y="1078" width="40" height="2" fill="#9b9b9b"/>
<rect x="640" y="1078" width="48.5" height="2" fill="#a8a8a8"/>
<!-- explorer -->
<g>
<path d="M408,1051 h7 l1.6,2 h11.4 v3 h-20z" fill="#e8a721"/>
<rect x="408" y="1054" width="21.5" height="14" fill="#f9d262"/>
<rect x="408" y="1056" width="21.5" height="2.2" fill="#f5c542"/>
<rect x="410.5" y="1061.5" width="16.5" height="6.5" fill="#3e9bdc"/>
<rect x="414" y="1064.5" width="9.5" height="3.5" fill="#f9d262"/>
</g>
<!-- chrome -->
<g>
<circle cx="467.6" cy="1060" r="11.2" fill="#e33b2e"/>
<path d="M467.6,1060 L457.9,1054.4 A11.2,11.2 0 0 0 462,1069.7 L467.6,1060Z" fill="#2ca94f"/>
<path d="M462,1069.7 A11.2,11.2 0 0 0 467.6,1071.2 A11.2,11.2 0 0 0 477.3,1054.4 L467.6,1054.4 L467.6,1060 Z" fill="#fbc116"/>
<path d="M457.9,1054.4 A11.2,11.2 0 0 1 477.3,1054.4 Z" fill="#e33b2e"/>
<path d="M467.6,1060 L462,1069.7 A11.2,11.2 0 0 1 457.9,1054.4Z" fill="#2ca94f"/>
<circle cx="467.6" cy="1060" r="5.1" fill="#fff"/>
<circle cx="467.6" cy="1060" r="4" fill="#4a8af4"/>
</g>
<!-- twitter -->
<g>
<circle cx="516.6" cy="1060" r="11.2" fill="#1da1f2"/>
<path d="M523.2,1055.6 c-0.5,0.2 -1,0.4 -1.6,0.4 c0.6,-0.3 1,-0.9 1.2,-1.5 c-0.5,0.3 -1.1,0.5 -1.8,0.7 c-0.5,-0.6 -1.3,-0.9 -2.1,-0.9 c-1.6,0 -2.8,1.3 -2.8,2.8 c0,0.2 0,0.4 0.1,0.6 c-2.3,-0.1 -4.4,-1.2 -5.8,-3 c-0.2,0.4 -0.4,0.9 -0.4,1.4 c0,1 0.5,1.8 1.3,2.4 c-0.5,0 -0.9,-0.1 -1.3,-0.4 c0,1.4 1,2.5 2.3,2.8 c-0.4,0.1 -0.9,0.1 -1.3,0 c0.4,1.1 1.4,1.9 2.6,2 c-1.2,0.9 -2.6,1.3 -4.2,1.2 c1.3,0.8 2.8,1.3 4.4,1.3 c5.2,0 8.1,-4.3 8.1,-8.1 v-0.4 c0.5,-0.4 1,-0.9 1.3,-1.3z" fill="#fff"/>
</g>
<!-- discord -->
<g>
<path d="M557.5,1049.5 h16 a2.6,2.6 0 0 1 2.6,2.6 v20.5 l-3.6,-3.2 h-15 a2.6,2.6 0 0 1 -2.6,-2.6 v-14.7 a2.6,2.6 0 0 1 2.6,-2.6z" fill="#7289da"/>
<path d="M559.2,1055.6 c1.2,-0.9 2.6,-1.3 3.6,-1.4 l0.4,0.7 c1.5,-0.2 3,-0.2 4.6,0 l0.4,-0.7 c1,0.1 2.4,0.5 3.6,1.4 c1.3,2.1 2.1,4.6 1.9,7.7 c-1.2,1 -2.6,1.5 -3.8,1.7 l-0.8,-1.2 c0.6,-0.2 1.1,-0.5 1.6,-0.9 c-2.9,1.4 -6.400,1.4 -9.4,0 c0.5,0.4 1,0.700 1.600,0.900 l-0.8,1.200 c-1.200,-0.200 -2.600,-0.700 -3.800,-1.700 c-0.2,-3.100 0.6,-5.600 1.900,-7.700z" fill="#fff"/>
<ellipse cx="562.6" cy="1060.3" rx="1.3" ry="1.5" fill="#7289da"/>
<ellipse cx="568.4" cy="1060.3" rx="1.3" ry="1.5" fill="#7289da"/>
</g>
<!-- battle.net -->
<g>
<rect x="603.500" y="1048.500" width="24" height="24" fill="#0a0e14"/>
<g fill="none" stroke="#1794d8" stroke-width="1.500">
<ellipse cx="615.400" cy="1060.500" rx="9.500" ry="3.600" transform="rotate(-30 615.400 1060.500)"/>
<ellipse cx="615.400" cy="1060.500" rx="9.500" ry="3.600" transform="rotate(30 615.400 1060.500)"/>
<ellipse cx="615.400" cy="1060.500" rx="3.600" ry="9.500"/>
</g>
<path d="M612,1052 l3,-3 l1,5z M619,1069 l-3,3 l-1,-5z" fill="#33b3f0"/>
</g>
<!-- sketchup -->
<g>
<path d="M653.600,1052.300 L665.800,1049 L674,1052.600 L672.600,1066.700 L659.600,1071 L655,1066.400 Z" fill="#d6252c"/>
<path d="M653.600,1052.300 L665.800,1049 L674,1052.600 L661,1056.500 Z" fill="#f05050"/>
<path d="M661,1056.500 L674,1052.600 L672.600,1066.700 L659.600,1071 Z" fill="#b3141c"/>
<path d="M658.200,1053.700 L666,1051.800 L669.400,1053.200 L663.200,1055 L667.600,1057.200 L667,1061.800 L660.600,1064 L657.200,1062 L663.400,1060 L663.600,1058.200 L659.200,1056.200 Z" fill="#fff" opacity="0.93"/>
</g>
<!-- tray icons -->
<circle cx="1544.800" cy="1060" r="6.600" fill="#0f1a14" stroke="#1f5a3c" stroke-width="1.400"/>
<path d="M1543,1062 a4,4 0 0 1 3,-4" stroke="#2a6a48" stroke-width="0.800" fill="none"/>
<g>
<ellipse cx="1568.800" cy="1061" rx="6.600" ry="5.400" fill="#efe4dc"/>
<path d="M1563,1057 l1.500,-2.500 l2,1.500 h4.500 l2,-1.500 l1.500,2.500z" fill="#9a7a6a"/>
<ellipse cx="1569" cy="1063" rx="2.600" ry="1.800" fill="#d45a5a"/>
<circle cx="1566" cy="1059.500" r="0.900" fill="#333"/><circle cx="1571.600" cy="1059.500" r="0.900" fill="#333"/>
</g>
<path d="M1585.500,1058 c0,-3 1,-5 2.500,-5.500 c0.500,2 2,5 4.800,5 c2.800,0 4.300,-3 4.800,-5 c1.500,0.500 2.500,2.500 2.500,5.500 c0,4 -2,7.500 -4,9 l-1.500,-4 l-1.800,2 l-1.800,-2 l-1.500,4 c-2,-1.500 -4,-5 -4,-9z" fill="#1650e0"/>
<path d="M1611.500,1056 l2.500,-3 l1,6 l-1,6 l-2,-2z M1616.500,1058 l5.500,-5.500 l-0.500,5 l1.500,4 l-3,4.500 l-3.500,-1 z" fill="#e8e8e8"/>
<path d="M1633,1055 l2,-0.500 l6,4.500 l4,-2 c1.500,-0.500 2.500,0.500 1.500,1.500 l-3.500,2.500 l1,6.500 l-1.500,0.500 l-3,-5 l-3,1.500 l-0.500,2 l-1,0.200 l-0.500,-3.200 l-2.500,-1.800 l0.800,-0.800 l2.200,0.300 l2.500,-2z" fill="#efefef"/>
<g>
<rect x="1657.500" y="1052.500" width="15" height="15" fill="#2b3a2f"/>
<path d="M1659,1060 c2,-3.500 7,-4.500 10,-1 c-2,3.500 -7,4.500 -10,1z" fill="none" stroke="#76b900" stroke-width="1.400"/>
<circle cx="1664" cy="1059.700" r="1.600" fill="#76b900"/>
<rect x="1669.800" y="1058.500" width="2.200" height="5" fill="#f2e000"/><rect x="1669.800" y="1064.500" width="2.200" height="2" fill="#f2e000"/>
</g>
<g fill="none" stroke="#f0f0f0" stroke-width="1.200">
<rect x="1685.500" y="1056.500" width="7" height="11" rx="1"/>
<rect x="1686.800" y="1052.500" width="4.400" height="4"/>
<path d="M1692,1065.500 l1.800,1.800 l3.200,-3.800"/>
</g>
<g fill="none" stroke="#1794d8" stroke-width="1.300">
<ellipse cx="1713.300" cy="1060" rx="7.400" ry="2.800" transform="rotate(-30 1713.300 1060)"/>
<ellipse cx="1713.300" cy="1060" rx="7.400" ry="2.800" transform="rotate(30 1713.300 1060)"/>
<ellipse cx="1713.300" cy="1060" rx="2.800" ry="7.400"/>
</g>
<g>
<rect x="1733.300" y="1051.500" width="6" height="11.500" rx="3" fill="#f2f2f2"/>
<path d="M1731.200,1059.500 a5.100,5.100 0 0 0 10.200,0 M1736.300,1064.600 v2.800 M1733.300,1067.600 h6" fill="none" stroke="#f2f2f2" stroke-width="1.100"/>
</g>
<g fill="none" stroke="#f2f2f2" stroke-width="1.100">
<rect x="1757.500" y="1054.500" width="11" height="8"/>
<path d="M1763,1062.500 v3.500 M1759.500,1066.500 h7"/>
<rect x="1753.500" y="1055.500" width="3" height="4" fill="#101010"/>
<path d="M1755,1059.500 v5.500 h4"/>
</g>
<g fill="none" stroke="#f2f2f2" stroke-width="1.100">
<path d="M1777.500,1057.800 h2.600 l3.400,-3.300 v11 l-3.400,-3.300 h-2.600z"/>
<path d="M1786,1057.300 a3.800,3.800 0 0 1 0,5.400 M1788.200,1055.200 a6.800,6.800 0 0 1 0,9.600 M1790.300,1053.300 a9.600,9.600 0 0 1 0,13.400"/>
</g>
<!-- notification -->
<path d="M1879.500,1052.500 h16 v12.500 h-10 l-3,3.200 v-3.200 h-3z" fill="#f4f4f4"/>
<path d="M1882,1056 h11 M1882,1058.700 h11 M1882,1061.400 h7" stroke="#101010" stroke-width="1"/>
<circle cx="1894.400" cy="1067.400" r="7.600" fill="#2e2e2e" stroke="#8a8a8a" stroke-width="1.400"/>
<rect x="1915.500" y="1040" width="1" height="40" fill="#4c4c4c"/>
</svg>
<div class="abs" style="left:88px;top:11px;font-size:15px;color:#2a2a2a;white-space:nowrap;letter-spacing:-0.12px">Taper ici pour rechercher</div>
<div class="abs" style="left:1799.500px;top:4px;width:64px;text-align:center;font-size:12px;color:#fff;letter-spacing:-0.6px">18:59</div>
<div class="abs" style="left:1792px;top:22px;width:80px;text-align:center;font-size:12px;color:#fff;letter-spacing:-0.25px">12/10/2020</div>
<div class="abs" style="left:1889.400px;top:21.400px;width:10px;text-align:center;font-size:11px;font-weight:bold;color:#fff">4</div>

</div>
</body></html>
